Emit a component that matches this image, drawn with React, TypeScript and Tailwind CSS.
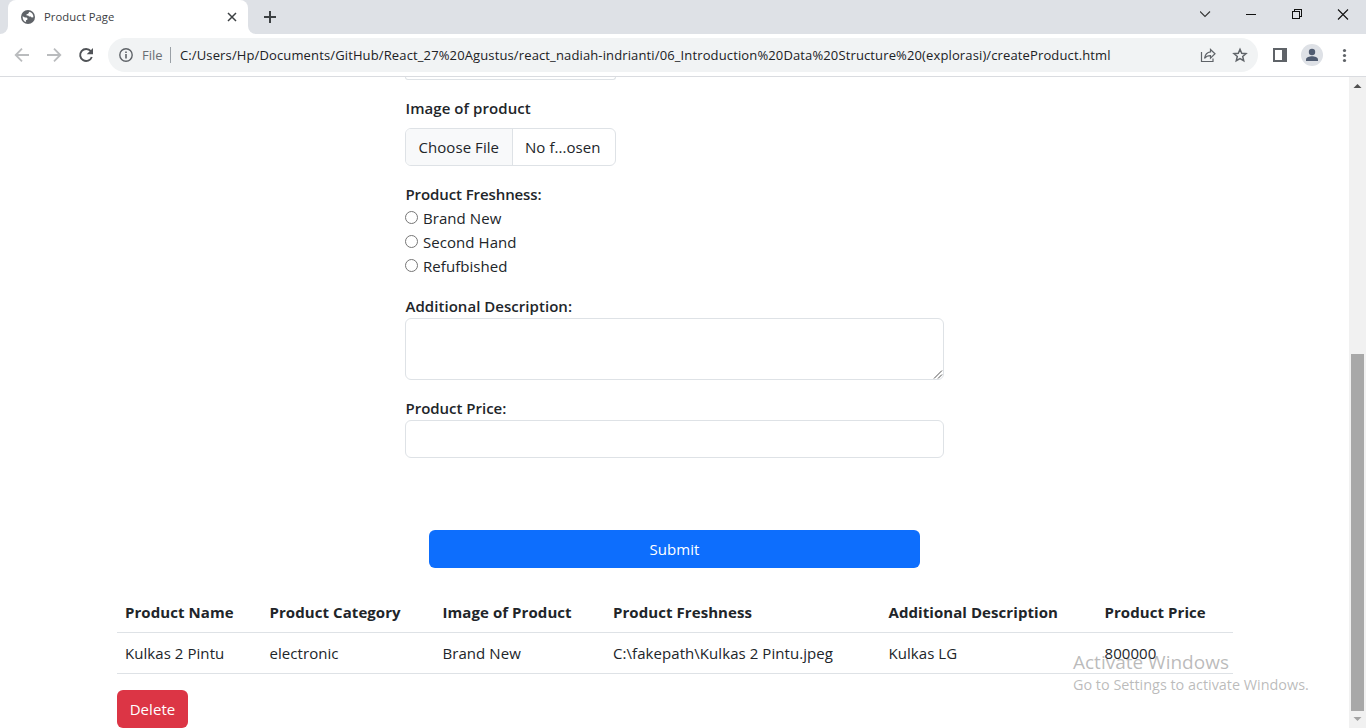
import React from "react";

function TabStrip() {
  return (
    <div className="flex h-[34px] bg-[#dee1e6]">
      <div className="w-2 bg-white">
        <div className="h-full rounded-br-lg bg-[#dee1e6]" />
      </div>
      <div className="bg-[#dee1e6]">
        <div className="flex h-[34px] w-[240px] items-center rounded-t-lg bg-white pl-[13px]">
          <svg width="14" height="14" viewBox="0 0 14 14">
            <circle cx="7" cy="7" r="7" fill="#5f6368" />
            <path d="M1.6 6.2 4 7.4l1.6.1.9 1.1-.2 1.2-1.4.5.2 1.8C3 11.500 1.500 9.500 1.600 6.200zM8.300 1.700C11 2.300 12.600 4.700 12.400 7.200l-1.700.2-1-.9-1.700.1-.8-1.200H5.600l-.1-1.200 1.700-.5z" fill="#fff" />
          </svg>
          <span className="ml-[9px] w-[180px] text-[11.25px] leading-4 tracking-[0.06px] text-[#3c4043]">Product Page</span>
          <svg width="16" height="16" viewBox="0 0 16 16" stroke="#3c4043" strokeWidth="1.5">
            <path d="M4 4l8 8M12 4l-8 8" />
          </svg>
        </div>
      </div>
      <div className="w-2 bg-white">
        <div className="h-full rounded-bl-lg bg-[#dee1e6]" />
      </div>
      <svg width="14" height="34" viewBox="0 0 14 34" className="ml-[7px]" stroke="#3c4043" strokeWidth="2">
        <path d="M1 17h12M7 11v12" />
      </svg>
      <svg width="166" height="34" viewBox="1200 0 166 34" className="ml-auto" fill="none" stroke="#111" strokeWidth="1.1">
        <path d="M1200 11.500l5 5 5-5" stroke="#333" />
        <path d="M1246 14.500h10" shapeRendering="crispEdges" />
        <path d="M1292.500 11.500h7v7h-7zM1294.500 11v-1.500h7v7h-1.500" shapeRendering="crispEdges" strokeWidth="1" />
        <path d="M1338 9.500l10 10M1348 9.500l-10 10" />
      </svg>
    </div>
  );
}

function Toolbar() {
  return (
    <div className="flex h-[43px] items-start border-b border-[#dadce0] bg-white pt-1">
      <svg width="108" height="34" viewBox="0 38 108 34" fill="none" strokeWidth="1.8">
        <path d="M29 55H16M22 48.700 15.700 55l6.300 6.300" stroke="#babcbe" />
        <path d="M47 55h13M54 48.700 60.300 55 54 61.300" stroke="#babcbe" />
        <path d="M90.800 51.200A6 6 0 1 0 91.800 57" stroke="#505357" strokeWidth="1.900" />
        <path d="M93 48v6.300h-6.300z" fill="#505357" />
      </svg>
      <div className="flex h-[34px] w-[1150px] items-center rounded-full bg-[#f1f3f4] pl-[11px] text-[13px] leading-4">
        <svg width="14" height="14" viewBox="0 0 14 14" fill="none" stroke="#5f6368" strokeWidth="1.4">
          <circle cx="7" cy="7" r="6.200" />
          <path d="M7 6v4.500M7 3.500v1.500" strokeWidth="1.600" />
        </svg>
        <span className="ml-[9px] w-7 text-[#6a6e73]">File</span>
        <div className="h-4 w-px bg-[#9aa0a6]" />
        <span className="ml-[9px] w-[1012px] whitespace-nowrap tracking-[0.13px] text-[#202124]">
          C:/Users/Hp/Documents/GitHub/React_27%20Agustus/react_nadiah-indrianti/06_Introduction%20Data%20Structure%20(explorasi)/createProduct.html
        </span>
        <svg width="66" height="34" viewBox="1192 38 66 34" className="shrink-0" fill="none" stroke="#5f6368" strokeWidth="1.2">
          <path d="M1201.500 52v9.500h11.500V58.500" />
          <path d="M1210.500 49.500l4.500 4.300-4.500 4.300v-2.500c-3 0-4.700 1-6 2.700.5-3 2-6 6-6.400z" />
          <path d="M1240 49.300l1.700 4 4.300.4-3.300 2.800 1 4.200-3.700-2.200-3.700 2.200 1-4.200-3.300-2.800 4.300-.4z" strokeWidth="1.500" />
        </svg>
      </div>
      <svg width="108" height="34" viewBox="1258 38 108 34" fill="#5f6368">
        <path d="M1273 48h14v14h-14zm2 2v10h7V50z" fillRule="evenodd" />
        <circle cx="1312" cy="55" r="11" fill="#dee1e6" />
        <circle cx="1312" cy="52" r="3.200" fill="#4f5b70" />
        <path d="M1306 61v-1.500c0-2 3.500-3.200 6-3.200s6 1.200 6 3.200V61z" fill="#4f5b70" />
        <circle cx="1344.500" cy="50.500" r="1.600" />
        <circle cx="1344.500" cy="55.500" r="1.600" />
        <circle cx="1344.500" cy="60.500" r="1.600" />
      </svg>
    </div>
  );
}

function ProductForm() {
  return (
    <form className="ml-[405px] w-[539px]">
      <div className="h-[3px] w-[211px] rounded-b-md border border-t-0 border-[#dee2e6]" />
      <div className="mt-4 pl-[0.5px] font-semibold tracking-[0.07px]">Image of product</div>
      <div className="mt-2 flex h-[38px] w-[211px] items-center overflow-hidden rounded-md border border-[#dee2e6]">
        <span className="flex h-full w-[107px] items-center border-r border-[#dee2e6] bg-[#f8f9fa] pl-[12.5px]">Choose File</span>
        <span className="pl-3">No f...osen</span>
      </div>
      <div className="mt-4 pl-[0.5px] font-semibold tracking-[-0.1px]">Product Freshness:</div>
      {["Brand New", "Second Hand", "Refufbished"].map((label) => (
        <label key={label} className="flex h-6 items-center">
          <span className="mb-[2px] mr-[5px] h-[13px] w-[13px] rounded-full border border-[#767676] bg-white" />
          <span>{label}</span>
        </label>
      ))}
      <div className="mt-4 pl-[0.5px] font-semibold tracking-[0.04px]">Additional Description:</div>
      <div className="flex h-[62px] items-end justify-end rounded-md border border-[#dee2e6]">
        <svg width="11" height="11" viewBox="0 0 11 11" stroke="#555" strokeWidth="1">
          <path d="M2 10.500 10 2.500M6 10.500 10 6.500" />
        </svg>
      </div>
      <div className="mt-4 pl-[0.5px] font-semibold tracking-[-0.02px]">Product Price:</div>
      <div className="h-[38px] rounded-md border border-[#dee2e6]" />
      <div className="ml-6 mt-[72px] flex h-[38px] w-[491px] items-center justify-center rounded-md bg-[#0d6efd] text-white">
        Submit
      </div>
    </form>
  );
}

const headers = ["Product Name", "Product Category", "Image of Product", "Product Freshness", "Additional Description", "Product Price"];
const cells = ["Kulkas 2 Pintu", "electronic", "Brand New", "C:\\fakepath\\Kulkas 2 Pintu.jpeg", "Kulkas LG", "800000"];
const columns = "grid h-[41px] grid-cols-[144.500px_173px_170.500px_275.500px_216px_136.500px] items-center border-b border-[#dee2e6]";

function ProductTable() {
  return (
    <div className="ml-[117px] mt-6 w-[1116px]">
      <div className={columns}>
        {headers.map((h) => (
          <div key={h} className="whitespace-nowrap pl-2 font-bold tracking-[0.07px]">{h}</div>
        ))}
      </div>
      <div className={columns}>
        {cells.map((c) => (
          <div key={c} className="whitespace-nowrap pl-2">{c}</div>
        ))}
      </div>
      <div className="mt-4 flex h-[38px] w-[71px] items-center justify-center rounded-md bg-[#dc3545] text-white">Delete</div>
    </div>
  );
}

function ScrollBar() {
  return (
    <div className="flex w-[17px] flex-col items-center bg-[#f1f1f1]">
      <svg width="17" height="17" viewBox="0 0 17 17">
        <path d="M4.500 11 8.500 7l4 4z" fill="#505050" />
      </svg>
      <div className="mt-[260px] h-[357px] w-[13px] bg-[#a8a8a8]" />
      <svg width="17" height="17" viewBox="0 0 17 17">
        <path d="M4.500 6h8l-4 4z" fill="#a3a3a3" />
      </svg>
    </div>
  );
}

export default function App() {
  return (
    <div className="relative h-[728px] w-[1366px] overflow-hidden bg-white font-['Open_Sans',sans-serif] font-[370]">
      <TabStrip />
      <Toolbar />
      <div className="flex h-[651px]">
        <main className="w-[1349px] text-[15px] leading-6 tracking-[0.06px] text-[#212529]">
          <ProductForm />
          <ProductTable />
        </main>
        <ScrollBar />
      </div>
      <div className="pointer-events-none absolute left-[1073px] top-[650px] whitespace-nowrap text-[#787878]/50">
        <div className="text-[19px] leading-6">Activate Windows</div>
        <div className="text-[14.4px] leading-[22px]">Go to Settings to activate Windows.</div>
      </div>
    </div>
  );
}
